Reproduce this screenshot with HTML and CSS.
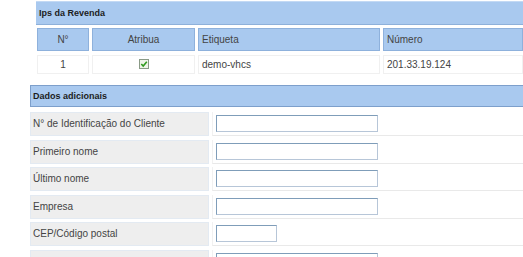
FILE: index.html
```html
<!DOCTYPE html>
<html lang="pt">
<head>
  <meta charset="UTF-8" />
  <title>Ips da Revenda</title>
  <link rel="stylesheet" href="styles.css">
</head>
<body>
  <!-- Ips da Revenda -->
  <div class="panel revenda">
    <div class="panel-title">Ips da Revenda</div>
    <div class="ip-grid">
      <div class="th center">N°</div>
      <div class="th center">Atribua</div>
      <div class="th">Etiqueta</div>
      <div class="th">Número</div>

      <div class="td center">1</div>
      <div class="td center">
        <span class="check">
          <svg width="10" height="10" viewBox="0 0 10 10">
            <rect x="0.5" y="0.5" width="9" height="9" fill="#eef5e8" stroke="#8a9a86" />
            <path d="M2.3 5 L4.2 7 L7.8 2.8" fill="none" stroke="#2f9a1c" stroke-width="1.6" />
          </svg>
        </span>
      </div>
      <div class="td">demo-vhcs</div>
      <div class="td">201.33.19.124</div>
    </div>
  </div>

  <!-- Dados adicionais -->
  <div class="panel dados">
    <div class="panel-title boxed">Dados adicionais</div>
    <div class="form-grid">
      <div class="label">N° de Identificação do Cliente</div>
      <div class="value"><input type="text" class="field" /></div>

      <div class="label">Primeiro nome</div>
      <div class="value"><input type="text" class="field" /></div>

      <div class="label">Último nome</div>
      <div class="value"><input type="text" class="field" /></div>

      <div class="label">Empresa</div>
      <div class="value"><input type="text" class="field" /></div>

      <div class="label">CEP/Código postal</div>
      <div class="value"><input type="text" class="field short" /></div>

      <div class="label"></div>
      <div class="value"><input type="text" class="field" /></div>
    </div>
  </div>
</body>
</html>
```

FILE: styles.css
```css
body {
  margin: 0;
  font-family: "Liberation Sans", Arial, sans-serif;
  font-size: 10px;
  color: #444;
  background: #ffffff;
  overflow: hidden;
}

.revenda {
  margin: 1px 0 0 36px;
}

.dados {
  margin: 11px 0 0 30px;
}

.panel-title {
  height: 22px;
  line-height: 22px;
  padding-left: 3px;
  background: #a9c9ef;
  border-top: 1px solid #c3d9f4;
  border-bottom: 1px solid #8db0da;
  font-size: 9px;
  font-weight: bold;
  color: #1c1c1c;
}

.panel-title.boxed {
  height: 20px;
  line-height: 20px;
  border: 1px solid #7d9fcb;
  border-right: none;
  padding-left: 2px;
}

.ip-grid {
  display: grid;
  grid-template-columns: 52px 103px 182px 1fr;
  grid-template-rows: 23px 19px;
  column-gap: 3px;
  row-gap: 4px;
  margin: 3px 0 0 1px;
}

.th {
  background: #a9c9ef;
  border: 1px solid #8eb1dc;
  padding-left: 3px;
  line-height: 21px;
}

.td {
  background: #ffffff;
  border: 1px solid #f0f0f0;
  padding-left: 3px;
  line-height: 17px;
}

.center {
  text-align: center;
  padding-left: 0;
}

.check {
  display: inline-block;
  vertical-align: middle;
  height: 10px;
  margin-top: -2px;
}

.check svg {
  display: block;
}

.form-grid {
  display: grid;
  grid-template-columns: 179px 1fr;
  grid-auto-rows: 24px;
  column-gap: 3px;
  row-gap: 3.6px;
  margin-top: 5px;
}

.label {
  background: #eeeeee;
  border: 1px solid #e3eaf2;
  padding-left: 2px;
  line-height: 22px;
}

.value {
  background: #ffffff;
  border-left: 1px solid #f1f1f1;
  border-bottom: 1px solid #e9e9e9;
  padding: 3px 0 0 3px;
}

.field {
  display: block;
  box-sizing: border-box;
  width: 162px;
  height: 17px;
  margin: 0;
  padding: 0 2px;
  border: 1px solid #7f9db9;
  border-right-color: #b7c6d8;
  border-bottom-color: #b7c6d8;
  background: #ffffff;
  font: inherit;
}

.field.short {
  width: 61px;
}
```
